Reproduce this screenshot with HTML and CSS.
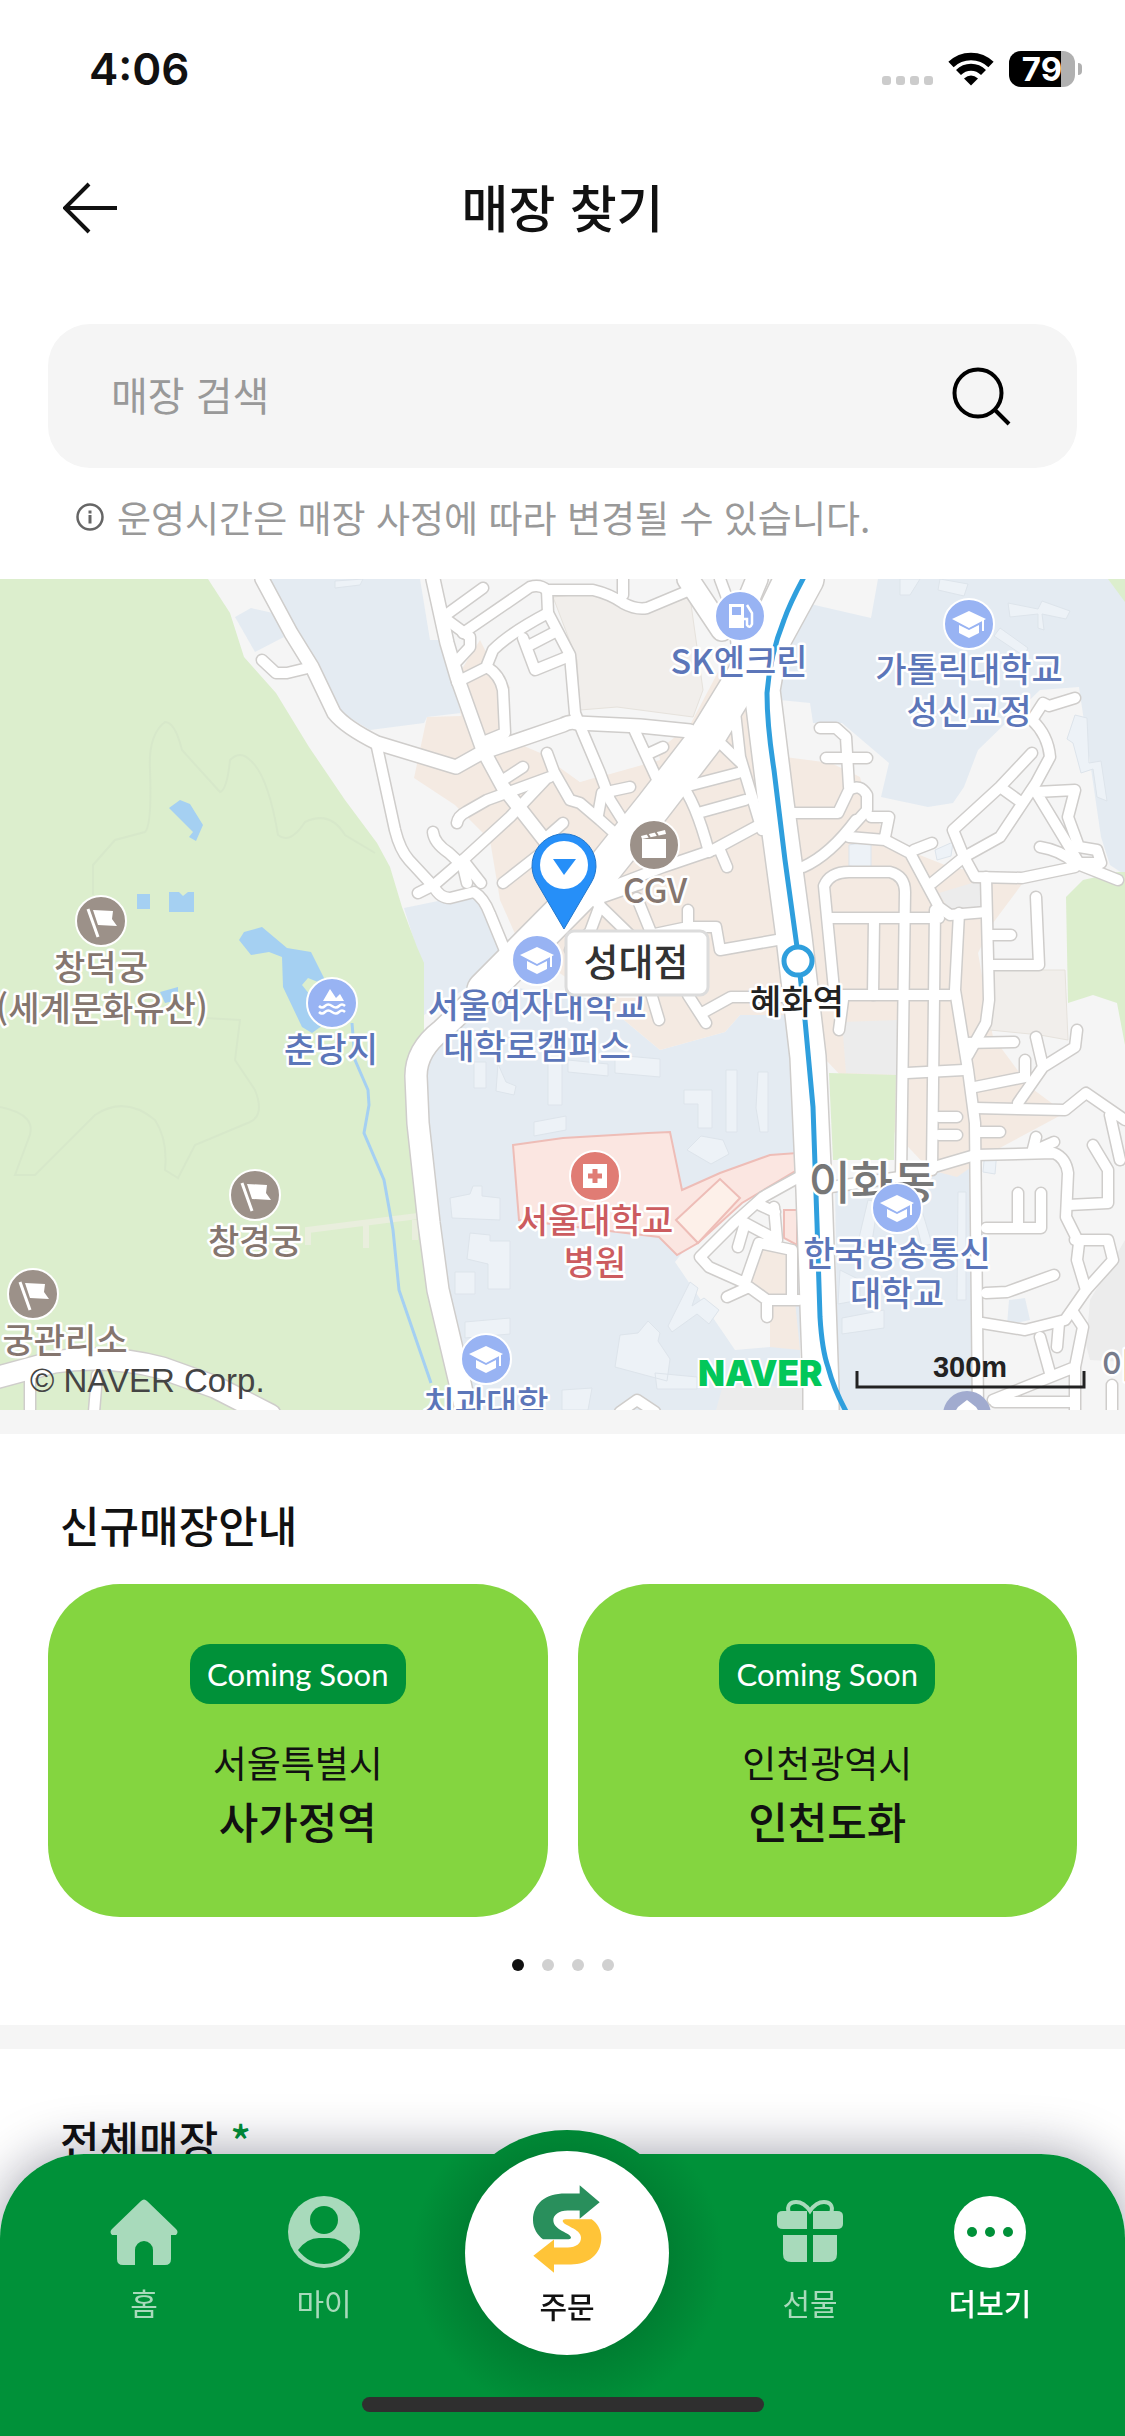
FILE: index.html
```html
<!DOCTYPE html>
<html lang="ko">
<head>
<meta charset="utf-8">
<meta name="viewport" content="width=device-width, initial-scale=1">
<title>매장 찾기</title>
<link rel="stylesheet" href="styles.css">
</head>
<body>
<div class="status-bar">
  <span class="status-time">4:06</span>
  <div class="status-icons">
    <svg class="signal" viewBox="0 0 51 9" aria-hidden="true"><rect width="9" height="9" rx="3"/><rect x="14" width="9" height="9" rx="3"/><rect x="28" width="9" height="9" rx="3"/><rect x="42" width="9" height="9" rx="3"/></svg>
    <svg class="wifi" viewBox="0 0 46 34" aria-hidden="true">
      <path d="M3 12.5C14 1.700 32 1.700 43 12.500" fill="none" stroke="#000" stroke-width="7.500"/>
      <path d="M10.500 20.500C17.500 13.500 28.500 13.500 35.500 20.500" fill="none" stroke="#000" stroke-width="7"/>
      <path d="M16 26.500Q23 20.500 30 26.500L23 33.500Z"/>
    </svg>
    <span class="battery"><span class="battery-level">79</span></span>
  </div>
</div>

<header class="page-header">
  <button class="back" type="button" aria-label="뒤로">
    <svg viewBox="0 0 54 52" aria-hidden="true"><path d="M26 2L2 26l24 24M2 26h52" fill="none" stroke="#111" stroke-width="4"/></svg>
  </button>
  <h1>매장 찾기</h1>
</header>

<main>
  <form class="search">
    <input type="text" placeholder="매장 검색" aria-label="매장 검색">
    <button type="submit" aria-label="검색">
      <svg viewBox="0 0 60 60" aria-hidden="true"><circle cx="27" cy="27" r="23.500" fill="none" stroke="#000" stroke-width="4"/><path d="M43 43L58 58" stroke="#000" stroke-width="4"/></svg>
    </button>
  </form>
  <p class="note">
    <svg viewBox="0 0 28 28" aria-hidden="true"><circle cx="14" cy="14" r="12.500" fill="none" stroke="#666" stroke-width="2.500"/><path d="M14 12v8.500M14 7.500v3" stroke="#666" stroke-width="3"/></svg>
    운영시간은 매장 사정에 따라 변경될 수 있습니다.
  </p>

  <svg class="map" viewBox="0 579 1125 831" role="img" aria-label="성대점 주변 지도">
    <defs>
      <g id="roads-minor">
        <path d="M262 660L276 673L287 673L312 667"/>
        <path d="M377 747L395 830Q400 850 409 860L434 887Q440 898 450 898L474 892Q484 898 490 914L506 953"/>
        <path d="M418 893L434 885L463 860L510 817L545 780"/>
        <path d="M457 823Q458 816 466 812L487 800L550 777"/>
        <path d="M433 832Q434 843 449 853L463 866L467 883M463 860L481 883"/>
        <path d="M503 883L545 850"/>
        <path d="M443 617L483 588M463 633L530 587Q540 584 547 590L593 590Q610 594 623 603Q636 610 647 608L690 590"/>
        <path d="M443 617L470 637V647L457 661M547 590L548 613L570 655L575 713L583 733L600 773L610 800L627 827"/>
        <path d="M457 682L487 667Q500 675 503 690L505 733L483 742M487 665L493 650Q510 633 548 613"/>
        <path d="M523 638L535 670L567 657M530 645L555 632"/>
        <path d="M503 780L523 767M547 753L554 772L570 800L580 803L600 820L620 838"/>
        <path d="M598 815L602 793L630 787M547 837L563 823M633 727L662 790M650 753L663 747"/>
        <path d="M712 735L740 762M623 579V595M720 579L730 606"/>
        <path d="M734 703L740 757L762 830M684 787L738 773M698 813L745 800M680 783Q695 800 709 852"/>
        <path d="M598 892L663 867L713 850L763 823M719 848L727 867"/>
        <path d="M594 900L630 935M600 898L640 884M637 898L652 935M600 905L590 932L570 950M688 910V927M650 935L688 927H716L720 950L777 940"/>
        <path d="M792 813H838L849 790Q860 783 867 795V810L849 830M849 787L846 737L836 728H820M826 758H867M803 867Q830 855 856 820"/>
        <path d="M849 837L885 840L910 853L939 907L950 915L986 912M871 817H889L885 837M914 850L932 843"/>
        <path d="M932 883L964 857L1000 837L1036 783L1050 757Q1048 735 1032 720L1043 703L1049 706L1075 698M964 857L953 830L1000 787L1032 753M1000 787L1018 800"/>
        <path d="M1036 792L1075 790L1068 817L1079 847L1097 850L1101 863L1079 863ZM1040 847Q1060 850 1075 863L1118 880M964 857L975 877L1022 878L1075 867"/>
        <path d="M835 1000L824 886Q830 872 849 872L890 872Q905 876 905 892L901 1177M828 918H939M874 920L873 995M935 910L932 1170M959 913L955 990L968 1070L975 1123L978 1410"/>
        <path d="M986 877L989 1000L986 1023L968 1055M993 935H1011M993 965H1039L1036 897M820 995H950M843 1000L839 1030"/>
        <path d="M964 1043L1014 1042M907 1073L964 1070M975 1087L1025 1077V1060M1036 1037L1043 1067L1018 1103M1043 1067L1075 1047L1077 1030"/>
        <path d="M975 1108L1065 1110L1086 1093L1125 1120M1110 1115L1120 1160M939 1117H957M939 1135H957M978 1132H1000"/>
        <path d="M831 1187L900 1177L975 1155L1054 1153Q1066 1158 1068 1173L1066 1217L1079 1243L1077 1260L1086 1290L1065 1320L1025 1330L982 1323"/>
        <path d="M1032 1153L1036 1137M1036 1150L1054 1142M1068 1205L1108 1203V1170L1093 1145M986 1228H1041V1193M1018 1193V1225"/>
        <path d="M1075 1240L1108 1240L1113 1260L1086 1290M986 1293L1007 1292L1054 1275M1073 1312L1083 1327L1075 1367L993 1400M1075 1367V1410M1059 1323L1057 1347M1040 1337L1050 1373M995 1402H1075"/>
        <path d="M659 1020L650 990M688 995L706 1023M702 1013L731 997H785M1112 1385V1410"/>
        <path d="M799 1177L763 1197L734 1223L700 1257L709 1267L745 1283L759 1243L792 1250V1300M727 1297L749 1287L767 1300H799M767 1317V1300M774 1207L777 1240M738 1247L745 1223L777 1240M760 1205L775 1212"/>
        <path d="M30 1380V1412M97 1375L94 1412M620 1412L637 1400L655 1412"/>
      </g>
      <g id="roads-medium">
        <path d="M433 579L447 643L457 677L483 750L503 787L546 842"/>
        <path d="M262 579L291 633L312 667L334 713Q345 727 377 743L456 767L481 753L563 725Q570 721 577 723L640 726L690 731"/>
      </g>
      <g id="roads-large">
        <path d="M510 965L442 1030Q416 1050 416 1076L418 1123L429 1223L438 1290L460 1383L467 1415"/>
        <path d="M-5 1378L54 1362Q108 1354 162 1368L215 1387L270 1415"/>
        <path d="M688 579L722 630M757 579L740 620L745 680"/>
      </g>
      <g id="roads-main">
        <path d="M485 990L597 877L653 807L707 737L745 675L792 579"/>
        <path d="M806 579L770 645L762 690L776 803L794 937L808 1057L814 1190L821 1390V1415"/>
      </g>
      <g id="pin-school">
        <circle class="poi-blue" r="25"/>
        <path d="M0 -13L17 -5L0 4L-17 -5ZM-10 1L0 6L10 1V9L0 14L-10 9ZM13 -4H15V7H13Z" fill="#fff"/>
      </g>
      <g id="pin-flag">
        <circle class="poi-brown" r="25"/>
        <path d="M-13 -12L-3 16" stroke="#fff" stroke-width="3"/>
        <path d="M-8 -11L12 -10L11 -2L16 5L-3 4Z" fill="#fff"/>
      </g>
    </defs>

    <rect y="579" width="1125" height="831" fill="#f5f5f5"/>
    <g class="campus">
      <path d="M270 579H420L430 640H440L461 713L427 717L424 723L370 730L337 710L312 663Z"/>
      <path d="M235 617L251 608L273 613L284 637L255 652Z"/>
      <path d="M404 908L477 893L503 953L474 983L424 1015L417 950Z"/>
      <path d="M424 1050L497 985L600 1000L660 1050L725 1032L740 1015H800V1410H460L424 1150Z"/>
      <path d="M806 603L871 618L878 579H1125V875L1110 865L1101 837L1079 687L1040 690L978 750L964 787L953 803L928 807L881 797L889 763L842 723H813L810 703L780 700L777 650Z"/>
      <path d="M835 1180L975 1165L978 1410H838Z"/>
      <path d="M1009 1300L1025 1298L1030 1320L1007 1325Z"/>
    </g>
    <g class="commercial">
      <path d="M427 717L461 716L455 680L480 640L490 660L512 690L510 740L545 755L580 782L640 765L690 725L735 640L765 700L790 1015H740L725 1032L660 1050L600 1000L540 960L520 945L500 900L490 840L455 805L414 778Z"/>
      <path d="M785 757L831 763L860 777L870 815L907 850L950 867L1025 880L993 923L978 953L993 1037L1030 1087L1065 1113L996 1150L957 1177L930 1170L826 1060L800 940Z"/>
      <path d="M757 1245L790 1252L800 1350L770 1347L765 1300L750 1280Z"/>
      <path d="M37 1385L60 1375L77 1410H37Z"/>
    </g>
    <path class="plain" d="M700 1230L740 1190L798 1180V1245L757 1245L750 1290L770 1300V1347L735 1350L675 1262Z"/>
    <path class="plain" d="M506 690L572 660L577 722L520 742L508 735ZM550 748L578 732L600 775L580 782L556 765ZM590 735L655 735L660 760L603 776Z"/>
    <g class="block">
      <path d="M553 597L593 593L647 612L690 597L703 690L693 717L617 707L580 710L577 660Z"/>
      <path d="M993 970H1065L1068 1040L1040 1035L990 1030Z"/>
    </g>
    <g class="block-gray">
      <path d="M842 1022L898 1020V1075L846 1073Z"/>
      <path d="M939 893L982 880L986 910L950 912Z"/>
      <path d="M723 1385L803 1387V1410H716Z"/>
      <path d="M1125 1240L1090 1300L1086 1345L1090 1360L1125 1362Z"/>
      <path d="M0 1395L22 1387L27 1410H0Z"/>
    </g>
    <g class="park">
      <path d="M0 579H208L230 613L244 657L276 693L309 747L345 800L377 843L390 867L402 907L417 947L424 963V1050L420 1220L460 1410H0Z"/>
      <path d="M829 1073L896 1075L894 1160H833Z"/>
      <path d="M1066 897L1083 880L1118 872H1125V1045L1117 1003L1093 995L1068 1003Z"/>
      <path d="M1108 579L1125 602V579Z"/>
    </g>
    <path class="trail" d="M93 895V865L115 840L145 832Q152 825 150 770Q148 735 165 722Q175 722 182 750L220 792Q227 790 230 760Q240 750 250 760Q268 775 278 835Q290 845 305 822Q330 810 345 835L375 853M0 1107Q40 1115 28 1140L15 1175H35L95 1115Q125 1095 155 1120Q168 1140 165 1170L178 1178L195 1145L250 1122Q265 1115 255 1090L235 1060L240 1020L205 1018"/>
    <path class="wall" d="M308 1245V1230L418 1216M366 1222V1248M415 1220V1240"/>
    <g class="building">
      <path d="M474 1062h12v26h-12zM498 1064l8 18 10 4-2 9-18-4zM548 1060h14v45h-14zM534 1122l32-6v14l-32 6z"/>
      <path d="M450 1198l20-4 3-8h9v10l18 2v22l-48-2zM470 1233l20 2v6h20v48h-22v-25l-21-5zM455 1272h20v22h-20zM465 1322l45-4v16l-45 4z"/>
      <path d="M568 1060l40 4v12l-40-4zM615 1055l45 4v18l-45-4zM684 1090h28v38h-14v-24h-14zM726 1070h11v62h-11zM758 1072h10v60h-8l-4-24zM687 1150l14-14 22 4 6 14-18 10z"/>
      <path d="M690 1282l8 6-6 18 12-8 15 12-10 14-12-10-25 18-4-6zM620 1335l18-2 10-12 12 12-2 8 12 18-3 22-52-14zM655 1373l42 4v12h-40zM562 1390l30-2-4 22h-26z"/>
      <path d="M958 1192h8v108h-9zM868 1200l10 2-6 40h-14zM840 1270l20 10v20l-22 4zM842 1318l42-8v18l-42 6zM910 1200l10 4 12 40-10 2z"/>
      <path d="M900 579h20l-10 16h-10zM940 579l28 5-4 12-26-6zM1008 603l30 6 4-8 28 10-4 8-24-5 2 16-6-2v-14l-28 3zM1000 628l28 20-4 8-30-20zM1075 715l12 3 2 45 12-2 6 40-10-4-4-28-12 4-8-30-6-4z"/>
      <path d="M849 845l22-4v28l-22-3zM935 850l18-8-2 14-14 4zM335 581l28-2-3 6-25 3zM985 1150h12l-2 24-12-2z"/>
    </g>
    <g class="hospital">
      <path d="M513 1145L563 1138L648 1133L670 1132L682 1190L720 1173L770 1155L797 1153V1170L742 1203L698 1243L677 1255L659 1237L519 1220Z"/>
      <path d="M784 1210H797V1245L784 1238Z"/>
      <path d="M676 1220L720 1179L740 1198L698 1243Z" fill="#fdf0e9"/>
    </g>
    <g class="water">
      <path d="M180 800L190 804L203 825L196 841L189 837L193 832L169 808Z"/>
      <path d="M137 894H150V909H137ZM169 892H179L183 896L188 892H194V912H169Z"/>
      <path d="M239 940L244 932L262 927L287 948L311 952L325 980L318 982L308 978L302 985L330 1020L312 1033L302 1027L283 987L282 957L269 952L251 955Z"/>
      <path d="M160 992L178 987V1000L165 1003Z"/>
      <path d="M352 1023L355 1060L368 1090L369 1105L364 1133L384 1180L393 1230L399 1290L431 1383" fill="none" stroke="#a5d0f2" stroke-width="3"/>
    </g>

    <g class="casing">
      <use href="#roads-minor" stroke-width="13"/>
      <use href="#roads-medium" stroke-width="16"/>
      <use href="#roads-large" stroke-width="24"/>
      <use href="#roads-main" stroke-width="38"/>
    </g>
    <g class="surface">
      <use href="#roads-minor" stroke-width="10"/>
      <use href="#roads-medium" stroke-width="13"/>
      <use href="#roads-large" stroke-width="21"/>
      <use href="#roads-main" stroke-width="35"/>
    </g>

    <g class="subway">
      <path d="M804 577Q790 603 784 620Q770 655 767 693Q767 725 774 770L785 860L797 947L805 1020L813 1107L817 1223L820 1317Q822 1350 828 1367Q834 1390 848 1415"/>
      <circle cx="798" cy="961" r="14" fill="#fff"/>
    </g>

    <text class="place district" x="872" y="1199">이화동</text>

    <g class="place place-blue">
      <text x="739" y="674">SK엔크린</text>
      <text x="969" y="682">가톨릭대학교</text>
      <text x="969" y="724">성신교정</text>
      <text x="331" y="1062">춘당지</text>
      <text x="537" y="1018">서울여자대학교</text>
      <text x="537" y="1059">대학로캠퍼스</text>
      <text x="897" y="1266">한국방송통신</text>
      <text x="897" y="1306">대학교</text>
      <text x="486" y="1416">치과대학</text>
    </g>
    <g class="place place-brown">
      <text x="655" y="903">CGV</text>
      <text x="101" y="980">창덕궁</text>
      <text x="102" y="1021">(세계문화유산)</text>
      <text x="255" y="1254">창경궁</text>
      <text x="65" y="1353">궁관리소</text>
    </g>
    <g class="place place-red">
      <text x="595" y="1233">서울대학교</text>
      <text x="595" y="1275">병원</text>
    </g>
    <text class="place place-black" x="797" y="1014">혜화역</text>
    <text class="place place-gray" x="1117" y="1378">이</text>

    <g transform="translate(740 616)">
      <circle class="poi-blue" r="25"/>
      <path d="M-11 -12H4V12H-11ZM-8 -9V-1H1V-9Z" fill="#fff" fill-rule="evenodd"/>
      <path d="M4 3H7V9Q10 13 12 8V-3L7 -11" fill="none" stroke="#fff" stroke-width="2.500"/>
    </g>
    <use href="#pin-school" x="969" y="624"/>
    <use href="#pin-school" x="537" y="960"/>
    <use href="#pin-school" x="897" y="1208"/>
    <use href="#pin-school" x="486" y="1359"/>
    <use href="#pin-flag" x="101" y="921"/>
    <use href="#pin-flag" x="255" y="1195"/>
    <use href="#pin-flag" x="33" y="1294"/>
    <g transform="translate(654 845)">
      <circle class="poi-brown" r="25"/>
      <path d="M-12 -6H12V13H-12ZM-13 -9L11 -15L12 -11L-12 -6Z" fill="#fff"/>
      <path d="M-7 -12L-4 -7M1 -14L4 -9" stroke="#9c9189" stroke-width="2"/>
    </g>
    <g transform="translate(332 1003)">
      <circle class="poi-blue" r="25"/>
      <path d="M-9 -2L-2 -14L4 -5L8 -9L12 -2Z" fill="#fff"/>
      <path d="M-13 3q3 3 6 0t7 0t7 0t6 0M-13 9q3 3 6 0t7 0t7 0t6 0" fill="none" stroke="#fff" stroke-width="2.500"/>
    </g>
    <g transform="translate(595 1176)">
      <circle r="25" fill="#e07c74" stroke="#fff" stroke-width="2"/>
      <rect x="-12" y="-12" width="24" height="24" fill="#fff"/>
      <path d="M0 -7V7M-7 0H7" stroke="#e07c74" stroke-width="5"/>
    </g>
    <g transform="translate(967 1415)">
      <circle r="24" fill="#a1abcf"/>
      <path d="M0 -15L9 -8L14 0H-14L-9 -8Z" fill="#fff"/>
    </g>

    <path d="M564 929L537 883A32 32 0 1 1 591 883Z" fill="#268ff8" stroke="#2277cc" stroke-width="1"/>
    <circle cx="564" cy="865" r="24" fill="#fff"/>
    <path d="M553 859H576L564 875Z" fill="#268ff8"/>
    <rect x="566" y="931" width="142" height="64" rx="8" fill="#fff" stroke="#dcdcdc" stroke-width="3"/>
    <text class="marker-label" x="636" y="976">성대점</text>

    <text class="copyright" x="30" y="1392">© NAVER Corp.</text>
    <text class="naver" x="698" y="1386">NAVER</text>
    <path d="M857 1371V1387H1084V1371" fill="none" stroke="#222" stroke-width="3"/>
    <text class="scale" x="970" y="1377">300m</text>
  </svg>

  <section class="section">
    <h2>신규매장안내</h2>
    <div class="cards">
      <article class="card">
        <span class="badge">Coming Soon</span>
        <p class="region">서울특별시</p>
        <p class="store">사가정역</p>
      </article>
      <article class="card">
        <span class="badge">Coming Soon</span>
        <p class="region">인천광역시</p>
        <p class="store">인천도화</p>
      </article>
    </div>
    <div class="dots"><i class="on"></i><i></i><i></i><i></i></div>
  </section>

  <section class="section">
    <h2>전체매장 <span class="star">*</span></h2>
  </section>
</main>

<nav class="tabs">
  <a class="tab" href="#home">
    <svg viewBox="0 0 72 72" fill="#a8dabb" aria-hidden="true"><path d="M33 5Q36 2 39 5L68 33Q71 36 68 39H63V63Q63 69 57 69H45V54A9 9 0 0 0 27 54V69H15Q9 69 9 63V39H4Q1 36 4 33Z"/></svg>
    홈
  </a>
  <a class="tab" href="#my">
    <svg viewBox="0 0 72 72" aria-hidden="true"><circle cx="36" cy="36" r="36" fill="#a8dabb"/><circle cx="36" cy="24" r="14" fill="#009139"/><path d="M10 54Q19 42 31 42H41Q53 42 62 54Q51 68 36 68T10 54Z" fill="#009139"/></svg>
    마이
  </a>
  <a class="order" href="#order">
    <svg viewBox="245 195 210 263" aria-hidden="true">
      <path fill="#298f5c" d="M388 220V195L448 246L388 296V271H352C325 271 309 285 309 300C309 330 362 338 362 352Q362 357 355 357H278C262 345 248 325 248 300C248 250 285 220 345 220Z"/>
      <path fill="#ffc438" d="M311 433V458L249 407L311 358V382H352C378 382 392 370 392 353C392 325 337 317 337 302Q337 297 345 297H424C440 308 453 328 453 353C453 405 412 433 362 433Z"/>
    </svg>
    주문
  </a>
  <a class="tab" href="#gift">
    <svg viewBox="0 0 72 72" fill="#a8dabb" aria-hidden="true"><path d="M9 15H33V33H9Q3 33 3 28V20Q3 15 9 15ZM39 15H63Q69 15 69 20V28Q69 33 63 33H39ZM9 39H33V66H17Q9 66 9 58ZM39 39H63V58Q63 66 55 66H39Z"/><path d="M15 17C12 9 17 6 22 6Q30 6 36 15Q42 6 50 6C55 6 60 9 57 17" fill="none" stroke="#a8dabb" stroke-width="4"/></svg>
    선물
  </a>
  <a class="tab active" href="#more">
    <svg viewBox="0 0 72 72" aria-hidden="true"><circle cx="36" cy="36" r="36" fill="#fff"/><g fill="#009139"><circle cx="18" cy="36" r="5"/><circle cx="36" cy="36" r="5"/><circle cx="54" cy="36" r="5"/></g></svg>
    더보기
  </a>
  <span class="home-indicator"></span>
</nav>
</body>
</html>
```

FILE: styles.css
```css
* { box-sizing: border-box; }

body {
  margin: 0;
  background: #fff;
  color: #111;
  font-family: "Noto Sans CJK KR", sans-serif;
}

h1, h2, p { margin: 0; font-weight: 500; }
button { padding: 0; border: 0; background: none; }
a { text-decoration: none; }
svg { display: block; flex: none; }

/* status bar */
.status-bar {
  display: flex;
  align-items: center;
  justify-content: space-between;
  height: 138px;
  padding: 0 44px 0 89px;
}
.status-time { font: 600 44px/54px Inter, sans-serif; }
.status-icons { display: flex; align-items: center; gap: 15px; }
.signal { width: 51px; height: 9px; margin-top: 22px; fill: #ccc; }
.wifi { width: 46px; height: 34px; }
.battery {
  position: relative;
  width: 66px;
  height: 36px;
  margin-right: 6px;
  border-radius: 12px;
  background: linear-gradient(90deg, #000 79%, #b0b0b0 79%);
}
.battery::after {
  content: "";
  position: absolute;
  right: -7px;
  top: 12px;
  width: 4px;
  height: 12px;
  border-radius: 0 4px 4px 0;
  background: #b0b0b0;
}
.battery-level {
  display: block;
  color: #fff;
  font: 700 33px/36px Inter, sans-serif;
  text-align: center;
}

/* header */
.page-header {
  display: grid;
  grid-template-columns: 54px 1fr 54px;
  align-items: center;
  height: 140px;
  padding: 0 63px;
}
.back svg { width: 54px; height: 52px; }
.page-header h1 { padding-bottom: 4px; font-size: 51px; line-height: 72px; text-align: center; }

/* search */
.search {
  display: flex;
  align-items: center;
  height: 144px;
  margin: 46px 48px 0;
  padding: 0 66px 0 63px;
  border-radius: 42px;
  background: #f5f5f5;
}
.search input {
  flex: 1;
  min-width: 0;
  padding: 0 0 4px;
  border: 0;
  outline: 0;
  background: none;
  color: #111;
  font: 400 40px/60px "Noto Sans CJK KR", sans-serif;
}
.search input::placeholder { color: #999; opacity: 1; }
.search svg { width: 60px; height: 60px; }

.note {
  display: flex;
  align-items: center;
  gap: 13px;
  height: 111px;
  padding: 0 76px 14px;
  color: #999;
  font-size: 37px;
  font-weight: 400;
  line-height: 54px;
}
.note svg { width: 28px; height: 28px; }

/* map */
.map { width: 100%; height: auto; overflow: hidden; }
.campus { fill: #e4ebf2; }
.commercial { fill: #f4eae2; }
.plain { fill: #f5f5f5; }
.block { fill: #f1eeeb; stroke: #e6e2dc; }
.block-gray { fill: #ececec; }
.park { fill: #dceecd; }
.trail { fill: none; stroke: #d7e8ca; stroke-width: 2; }
.wall { fill: none; stroke: #e9eedd; stroke-width: 6; }
.building { fill: #edf2f7; stroke: #dde4eb; }
.hospital { fill: #fbe6e1; stroke: #eebdb7; stroke-width: 2; }
.water { fill: #a5d0f2; }
.casing, .surface { fill: none; stroke-linecap: round; stroke-linejoin: round; }
.casing { stroke: #cfcdcb; }
.surface { stroke: #fff; }
.subway { fill: none; stroke: #2f9fdd; stroke-width: 5; }
.poi-blue { fill: #98b3f3; stroke: #fff; stroke-width: 2; }
.poi-brown { fill: #9c9189; stroke: #fff; stroke-width: 2; }
.place {
  font-size: 34px;
  font-weight: 500;
  text-anchor: middle;
  paint-order: stroke;
  stroke: #fff;
  stroke-width: 5;
  stroke-linejoin: round;
}
.place-blue { fill: #5c76b9; }
.place-brown { fill: #85766f; }
.place-red { fill: #cc5c60; }
.place-black { fill: #222; }
.place-gray { fill: #777c8c; }
.district { font-size: 46px; fill: #777; }
.marker-label { font-size: 38px; font-weight: 500; text-anchor: middle; fill: #333; }
.copyright { font-family: "Liberation Sans", sans-serif; font-size: 33px; fill: #444; }
.naver {
  font-family: Inter, sans-serif;
  font-size: 35px;
  font-weight: 900;
  fill: #03c75a;
  paint-order: stroke;
  stroke: #fff;
  stroke-width: 4;
}
.scale {
  font-family: "Liberation Sans", sans-serif;
  font-size: 29px;
  font-weight: 700;
  text-anchor: middle;
  fill: #222;
}

/* sections */
.section { padding: 60px 48px 54px; border-top: 24px solid #f5f5f5; }
.section h2 { padding-left: 12px; font-size: 43px; line-height: 60px; }
.section:last-child { padding-bottom: 120px; }
.star { color: #009139; }

.cards { display: grid; grid-template-columns: 1fr 1fr; gap: 30px; margin-top: 30px; }
.card {
  display: flex;
  flex-direction: column;
  align-items: center;
  padding: 60px 24px 67px;
  border-radius: 72px;
  background: #84d540;
}
.badge {
  width: 216px;
  border-radius: 20px;
  background: #009139;
  color: #fff;
  font: 400 31px/60px Lato, sans-serif;
  text-align: center;
}
.region { margin-top: 30px; font-size: 37px; font-weight: 400; line-height: 56px; }
.store { font-size: 43px; line-height: 60px; }

.dots { display: flex; justify-content: center; gap: 18px; margin-top: 42px; }
.dots i { width: 12px; height: 12px; border-radius: 50%; background: #d0d0d0; }
.dots .on { background: #111; }

/* bottom tabs */
.tabs {
  position: fixed;
  right: 0;
  bottom: 0;
  left: 0;
  display: grid;
  grid-template-columns: 1fr 1fr 306px 1fr 1fr;
  justify-items: center;
  align-items: start;
  height: 282px;
  padding: 0 45px 0 54px;
  border-radius: 84px 84px 0 0;
  background: radial-gradient(circle at calc(50% + 5px) 105px, #007d31 96px, #009139 156px);
  box-shadow: 0 0 54px rgba(10, 10, 40, 0.4);
}
.tab, .order {
  display: flex;
  flex-direction: column;
  align-items: center;
  font-size: 30px;
  line-height: 36px;
}
.tab { gap: 16px; padding-top: 42px; color: #a8dabb; }
.tab svg { width: 72px; height: 72px; }
.active { color: #fff; font-weight: 500; }
.order {
  position: relative;
  gap: 14px;
  width: 204px;
  height: 204px;
  margin-top: -3px;
  padding-top: 34px;
  color: #111;
  font-weight: 500;
  border-radius: 50%;
  background: #fff;
}
/* raised ring behind the round button */
.order::before {
  content: "";
  position: absolute;
  z-index: -1;
  inset: -21px;
  border-radius: 50%;
  background: radial-gradient(circle at 123px 129px, #007d31 96px, #009139 156px);
}
.order svg { width: 70px; height: 88px; }
.home-indicator {
  position: absolute;
  bottom: 24px;
  left: 50%;
  width: 402px;
  height: 15px;
  margin-left: -201px;
  border-radius: 8px;
  background: #2f2f2f;
}
```
